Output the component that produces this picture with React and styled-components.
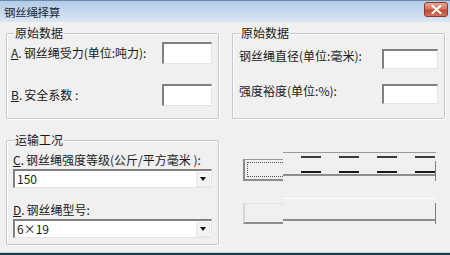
import React from 'react';
import styled, { createGlobalStyle } from 'styled-components';

const GlobalStyle = createGlobalStyle`
  html, body {
    margin: 0;
    padding: 0;
    background: #f0f0f0;
  }
  * {
    box-sizing: border-box;
  }
`;

const Window = styled.div`
  width: 450px;
  height: 255px;
  display: flex;
  flex-direction: column;
  background: #f0f0f0;
  font-family: "Noto Sans CJK SC", "Noto Sans", sans-serif;
  font-size: 12px;
  color: #1a1a1a;
  overflow: hidden;
`;

const TitleBar = styled.div`
  height: 22px;
  flex: none;
  display: flex;
  align-items: center;
  justify-content: space-between;
  padding: 0 2px 0 4px;
  border-top: 1px solid #6f8aa8;
  background: linear-gradient(to bottom, #b2cbe6 0%, #c6d8ee 50%, #d9e6f4 100%);
`;

const Title = styled.span`
  font-size: 11.5px;
  color: #1c2a3a;
  letter-spacing: -0.3px;
`;

const CloseButton = styled.div`
  width: 24px;
  height: 15px;
  margin-top: -4px;
  border: 1px solid #8b3b2c;
  border-radius: 3px;
  display: flex;
  align-items: center;
  justify-content: center;
  background: linear-gradient(to bottom, #e8a794 0%, #d8745d 45%, #c24a32 55%, #d4735b 100%);
`;

const Body = styled.div`
  flex: 1;
  display: flex;
  flex-direction: column;
  gap: 21px;
  padding: 11px 5px 0 6px;
`;

const BottomEdge = styled.div`
  height: 3px;
  flex: none;
  border-top: 1px solid #b9d4e6;
  background: #1d3f4b;
`;

const Row = styled.div`
  display: grid;
  grid-template-columns: 213px 213px;
  column-gap: 13px;
`;

const Group = styled.div`
  position: relative;
  border: 1px solid #c4c8cc;
  border-radius: 2px;
  box-shadow: inset 1px 1px 0 #ffffff, 1px 1px 0 #ffffff;
  display: flex;
  flex-direction: column;
  gap: ${(p) => p.$gap}px;
  padding: ${(p) => p.$pad};
  height: ${(p) => p.$h}px;
`;

const Legend = styled.span`
  position: absolute;
  top: -9px;
  left: 7px;
  padding: 0 1px;
  background: #f0f0f0;
  line-height: 16px;
`;

const Field = styled.div`
  display: flex;
  justify-content: space-between;
  align-items: ${(p) => (p.$top ? 'flex-start' : 'center')};
`;

const Label = styled.span`
  line-height: 16px;
  white-space: nowrap;
  margin-top: ${(p) => (p.$top ? '-1px' : '0')};
`;

const Key = styled.span`
  text-decoration: underline;
`;

const Dot = styled.span`
  margin-right: 2px;
`;

const TextBox = styled.div`
  width: ${(p) => p.$w}px;
  height: ${(p) => p.$h}px;
  background: #ffffff;
  border-top: 2px solid #808080;
  border-left: 2px solid #808080;
  border-right: 1px solid #e4e4e4;
  border-bottom: 1px solid #e4e4e4;
`;

const ComboLabel = styled.span`
  line-height: 16px;
  white-space: nowrap;
  margin-bottom: 1px;
`;

const Combo = styled.div`
  height: 19px;
  display: flex;
  align-items: center;
  background: #ffffff;
  border-top: 2px solid #808080;
  border-left: 2px solid #808080;
  border-right: 1px solid #e4e4e4;
  border-bottom: 1px solid #e4e4e4;
  padding-left: 2px;
`;

const ComboText = styled.span`
  flex: 1;
  font-size: 12px;
  line-height: 16px;
`;

const DropButton = styled.div`
  width: 14px;
  height: 15px;
  margin-right: 1px;
  background: #f3f3f3;
  border: 1px solid #e8e8e8;
  display: flex;
  align-items: center;
  justify-content: center;
`;

const Arrow = styled.span`
  width: 0;
  height: 0;
  border-left: 3.5px solid transparent;
  border-right: 3.5px solid transparent;
  border-top: 4px solid #111;
`;

const ComboBlock = styled.div`
  display: flex;
  flex-direction: column;
`;

const ButtonColumn = styled.div`
  display: flex;
  flex-direction: column;
  gap: 17px;
  padding: 12px 0 0 11px;
`;

const GlitchButton = styled.div`
  display: flex;
  align-items: flex-end;
`;

const ButtonFace = styled.div`
  width: 40px;
  height: ${(p) => p.$h}px;
  padding: 2px 0 2px 2px;
  border-left: 2px solid ${(p) => (p.$focused ? '#8c8c8c' : '#d6d6d6')};
  border-top: 1px solid ${(p) => (p.$focused ? '#9a9a9a' : '#e2e2e2')};
  border-bottom: 2px solid #8c8c8c;
  background: #f0f0f0;
`;

const FocusRect = styled.div`
  height: 100%;
  border: 1px dotted #555;
  border-right: none;
`;

const Tail = styled.div`
  position: relative;
  width: 153px;
  height: ${(p) => p.$h}px;
  display: flex;
  flex-direction: column;
  border-top: 1px solid ${(p) => p.$topColor};
  &::after {
    content: '';
    position: absolute;
    right: 0;
    top: ${(p) => p.$edgeTop}px;
    bottom: 0;
    width: 1px;
    background: #7d7d7d;
  }
`;

const Dashes = styled.div`
  height: 2px;
  margin-top: ${(p) => p.$mt}px;
  background: repeating-linear-gradient(
    to right,
    transparent 0 18px,
    ${(p) => p.$color} 18px 38px
  );
`;

const TailLine = styled.div`
  height: 2px;
  margin-top: ${(p) => p.$mt}px;
  background: #8c8c8c;
`;

function Mnemonic({ letter }) {
  if (!letter) return null;
  return (
    <>
      <Key>{letter}</Key>
      <Dot>.</Dot>
    </>
  );
}

function GroupField({ keyChar, text, w, h, top }) {
  return (
    <Field $top={top}>
      <Label $top={top}>
        <Mnemonic letter={keyChar} />
        {text}
      </Label>
      <TextBox $w={w} $h={h} />
    </Field>
  );
}

function ComboField({ keyChar, text, value }) {
  return (
    <ComboBlock>
      <ComboLabel>
        <Mnemonic letter={keyChar} />
        {text}
      </ComboLabel>
      <Combo>
        <ComboText>{value}</ComboText>
        <DropButton>
          <Arrow />
        </DropButton>
      </Combo>
    </ComboBlock>
  );
}

export default function App() {
  return (
    <>
      <GlobalStyle />
      <Window>
        <TitleBar>
          <Title>钢丝绳择算</Title>
          <CloseButton>
            <svg width="11" height="9" viewBox="0 0 11 9">
              <path d="M1.5 1 L9.5 8 M9.5 1 L1.5 8" stroke="#ffffff" strokeWidth="2.2" strokeLinecap="round" />
            </svg>
          </CloseButton>
        </TitleBar>
        <Body>
          <Row>
            <Group $pad="8px 6px 12px 4px" $gap={20} $h={86}>
              <Legend>原始数据</Legend>
              <GroupField keyChar="A" text="钢丝绳受力(单位:吨力):" w={50} h={22} />
              <GroupField keyChar="B" text="安全系数 :" w={50} h={22} />
            </Group>
            <Group $pad="15px 6px 13px 6px" $gap={15} $h={86}>
              <Legend>原始数据</Legend>
              <GroupField text="钢丝绳直径(单位:毫米):" w={56} h={20} top />
              <GroupField text="强度裕度(单位:%):" w={56} h={20} top />
            </Group>
          </Row>
          <Row>
            <Group $pad="11px 6px 6px 6px" $gap={14} $h={105}>
              <Legend>运输工况</Legend>
              <ComboField keyChar="C" text="钢丝绳强度等级(公斤/平方毫米 ):" value="150" />
              <ComboField keyChar="D" text="钢丝绳型号:" value="6×19" />
            </Group>
            <ButtonColumn>
              <GlitchButton>
                <ButtonFace $h={22} $focused>
                  <FocusRect />
                </ButtonFace>
                <Tail $h={29} $topColor="#9a9a9a" $edgeTop={8}>
                  <Dashes $mt={3} $color="#3a3a3a" />
                  <Dashes $mt={13} $color="#1a1a1a" />
                  <TailLine $mt={1} />
                </Tail>
              </GlitchButton>
              <GlitchButton>
                <ButtonFace $h={21} />
                <Tail $h={26} $topColor="#ffffff" $edgeTop={4}>
                  <TailLine $mt={20} />
                </Tail>
              </GlitchButton>
            </ButtonColumn>
          </Row>
        </Body>
        <BottomEdge />
      </Window>
    </>
  );
}
